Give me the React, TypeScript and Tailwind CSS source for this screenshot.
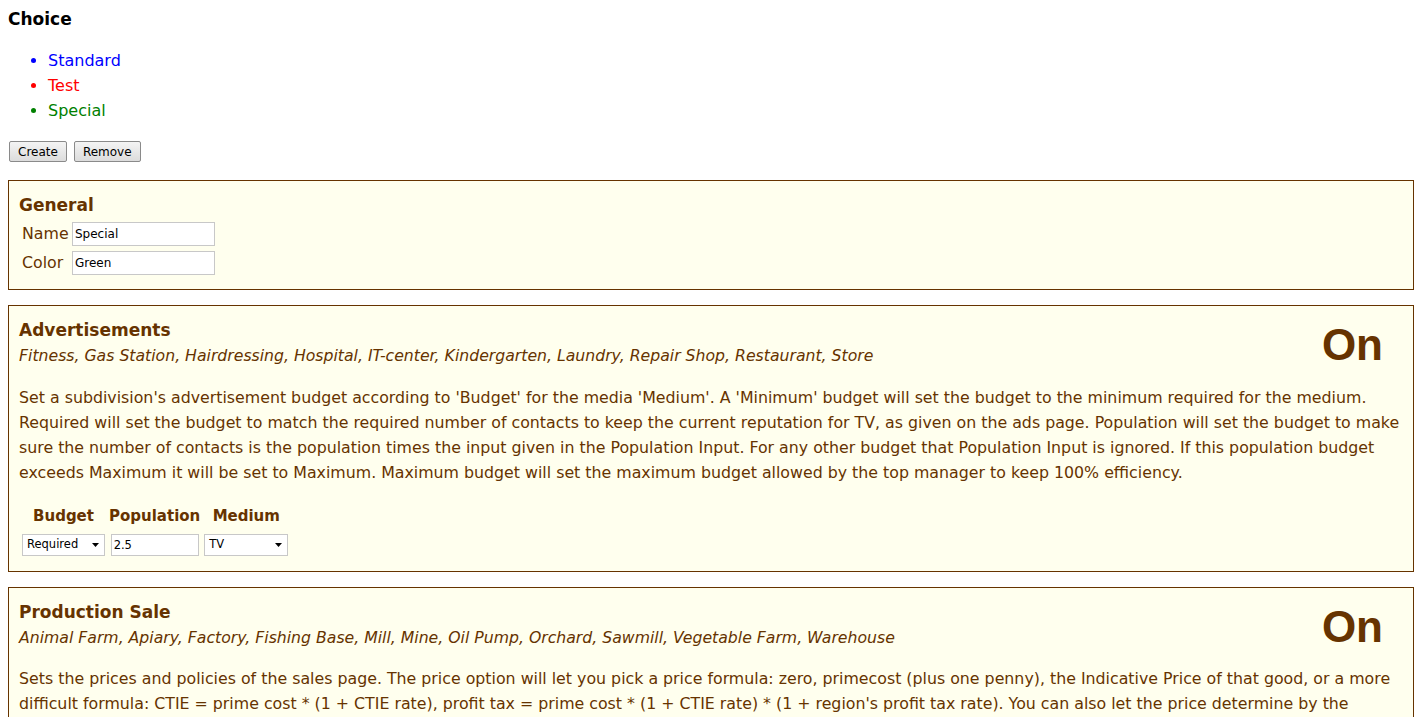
import React from "react";

function Arrow() {
  return (
    <svg width="7" height="4" viewBox="0 0 7 4" className="shrink-0">
      <path d="M0 0 L7 0 L3.5 4 Z" fill="#000" />
    </svg>
  );
}

function Section({ title, subtitle, children, pb = "pb-[14px]" }: { title: string; subtitle?: string; children?: React.ReactNode; pb?: string }) {
  return (
    <div className={`mx-2 mb-[15px] border border-[#663300] bg-[#ffffee] px-[10px] pt-[12px] ${pb} text-[#663300]`}>
      <div className="flex items-start justify-between">
        <div>
          <div className="text-[17px] font-bold leading-[24px]">{title}</div>
          {subtitle && <div className="mt-px text-[15.7px] italic leading-[26px]">{subtitle}</div>}
        </div>
        {subtitle && (
          <div className="pr-[20px] pt-[4px] font-['Liberation_Sans',Arial,sans-serif] text-[44px] font-bold leading-[46px]">On</div>
        )}
      </div>
      {children}
    </div>
  );
}

export default function App() {
  return (
    <div className="min-h-[717px] bg-white font-['DejaVu_Sans',Verdana,sans-serif] text-[15.8px]">
      <div className="px-2 pt-[8px]">
        <h3 className="text-[17px] font-bold leading-[22px] text-black">Choice</h3>
        <ul className="mt-[18px] pl-[40px] text-[16px] leading-[25px]">
          <li className="list-disc text-[#0000ff]">Standard</li>
          <li className="list-disc text-[#ff0000]">Test</li>
          <li className="list-disc text-[#008000]">Special</li>
        </ul>
        <div className="mt-[18px] mb-[18px] flex gap-[7px] pl-px">
          <button className="h-[21px] rounded-[2px] border border-[#8a8a8a] bg-gradient-to-b from-[#f4f4f4] to-[#dcdcdc] px-[8px] text-[12px] text-black">Create</button>
          <button className="h-[21px] rounded-[2px] border border-[#8a8a8a] bg-gradient-to-b from-[#f4f4f4] to-[#dcdcdc] px-[8px] text-[12px] text-black">Remove</button>
        </div>
      </div>

      <Section title="General">
        <div className="mt-[5px] flex flex-col gap-[5px] pl-[3px]">
          <div className="flex items-center gap-[4px]">
            <span className="w-[46px]">Name</span>
            <input className="h-[24px] w-[143px] border border-[#c8c8c8] bg-white px-[2px] text-[12px] text-black outline-none" defaultValue="Special" />
          </div>
          <div className="flex items-center gap-[4px]">
            <span className="w-[46px]">Color</span>
            <input className="h-[24px] w-[143px] border border-[#c8c8c8] bg-white px-[2px] text-[12px] text-black outline-none" defaultValue="Green" />
          </div>
        </div>
      </Section>

      <Section title="Advertisements" pb="pb-[15px]" subtitle="Fitness, Gas Station, Hairdressing, Hospital, IT-center, Kindergarten, Laundry, Repair Shop, Restaurant, Store">
        <p className="mt-[16px] leading-[25px]">
          Set a subdivision's advertisement budget according to 'Budget' for the media 'Medium'. A 'Minimum' budget will set the budget to the minimum required for the medium. Required will set the budget to match the required number of contacts to keep the current reputation for TV, as given on the ads page. Population will set the budget to make sure the number of contacts is the population times the input given in the Population Input. For any other budget that Population Input is ignored. If this population budget exceeds Maximum it will be set to Maximum. Maximum budget will set the maximum budget allowed by the top manager to keep 100% efficiency.
        </p>
        <table className="mt-[19px] ml-px border-collapse">
          <thead>
            <tr className="text-[15px] font-bold">
              <th className="px-[2px] pb-[6px] text-center leading-[24px]">Budget</th>
              <th className="px-[2px] pb-[6px] text-center leading-[24px]">Population</th>
              <th className="px-[2px] pb-[6px] text-center leading-[24px]">Medium</th>
            </tr>
          </thead>
          <tbody>
            <tr>
              <td className="px-[2px]">
                <div className="flex h-[22px] w-[83px] items-center justify-between border border-[#c8c8c8] bg-white pr-[5px] pl-[4px] text-[11.5px] text-black">
                  <span>Required</span><Arrow />
                </div>
              </td>
              <td className="px-[2px] text-center">
                <input className="mx-auto block h-[22px] w-[88px] border border-[#c8c8c8] bg-white px-[2px] text-[11.5px] text-black outline-none" defaultValue="2.5" />
              </td>
              <td className="px-[2px]">
                <div className="flex h-[22px] w-[84px] items-center justify-between border border-[#c8c8c8] bg-white pr-[5px] pl-[4px] text-[11.5px] text-black">
                  <span>TV</span><Arrow />
                </div>
              </td>
            </tr>
          </tbody>
        </table>
      </Section>

      <Section title="Production Sale" subtitle="Animal Farm, Apiary, Factory, Fishing Base, Mill, Mine, Oil Pump, Orchard, Sawmill, Vegetable Farm, Warehouse">
        <p className="mt-[15px] leading-[25px]">
          Sets the prices and policies of the sales page. The price option will let you pick a price formula: zero, primecost (plus one penny), the Indicative Price of that good, or a more difficult formula: CTIE = prime cost * (1 + CTIE rate), profit tax = prime cost * (1 + CTIE rate) * (1 + region's profit tax rate). You can also let the price determine by the market, using the sales history of that product. The policy option sets who is allowed to buy the product.
        </p>
      </Section>
    </div>
  );
}
